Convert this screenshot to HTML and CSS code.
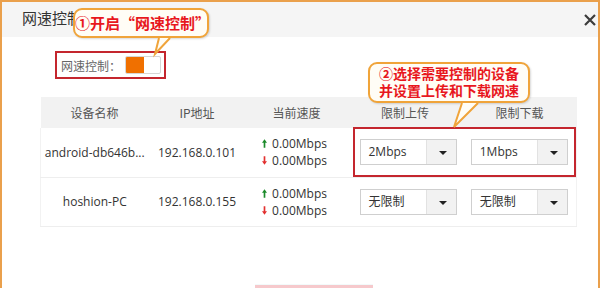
FILE: index.html
```html
<!DOCTYPE html>
<html lang="zh-CN">
<head>
    <meta charset="UTF-8">
    <title>网速控制</title>
    <link rel="stylesheet" href="styles.css">
</head>
<body>
    <div class="dialog">
        <div class="dialog-head">
            <h2>网速控制</h2>
            <span class="close">
                <svg width="12" height="12" viewBox="0 0 12 12"><path d="M1 1L11 11M11 1L1 11" stroke="#3c3c3c" stroke-width="2.2"/></svg>
            </span>
        </div>

        <div class="dialog-body">
            <div class="switch-row">
                <span class="switch-box">
                    <span class="switch-label">网速控制：</span>
                    <span class="switch"><i></i></span>
                </span>
            </div>

            <div class="table-wrap">
                <table>
                    <thead>
                        <tr>
                            <th class="c1">设备名称</th>
                            <th class="c2">IP地址</th>
                            <th class="c3">当前速度</th>
                            <th class="c4">限制上传</th>
                            <th class="c5">限制下载</th>
                        </tr>
                    </thead>
                    <tbody>
                        <tr>
                            <td>android-db646b...</td>
                            <td>192.168.0.101</td>
                            <td>
                                <div class="speed">
                                    <span><svg class="up" viewBox="0 0 6 10"><path d="M3 0L6 4H4V10H2V4H0Z"/></svg>0.00Mbps</span>
                                    <span><svg class="down" viewBox="0 0 6 10"><path d="M3 10L6 6H4V0H2V6H0Z"/></svg>0.00Mbps</span>
                                </div>
                            </td>
                            <td><div class="select sel-up"><span>2Mbps</span><b></b></div></td>
                            <td><div class="select"><span>1Mbps</span><b></b></div></td>
                        </tr>
                        <tr>
                            <td>hoshion-PC</td>
                            <td>192.168.0.155</td>
                            <td>
                                <div class="speed">
                                    <span><svg class="up" viewBox="0 0 6 10"><path d="M3 0L6 4H4V10H2V4H0Z"/></svg>0.00Mbps</span>
                                    <span><svg class="down" viewBox="0 0 6 10"><path d="M3 10L6 6H4V0H2V6H0Z"/></svg>0.00Mbps</span>
                                </div>
                            </td>
                            <td><div class="select sel-up"><span>无限制</span><b></b></div></td>
                            <td><div class="select"><span>无限制</span><b></b></div></td>
                        </tr>
                    </tbody>
                </table>
                <div class="mark"></div>
            </div>

            <div class="foot"><span class="btn-save"></span></div>
        </div>

        <!-- 标注气泡 -->
        <div class="tip tip-1">
            ①开启“网速控制”
            <svg class="tail" width="20" height="18" viewBox="0 0 20 18"><path d="M4 0L0 16L15 0" fill="#fffdf6" stroke="#f0a43a" stroke-width="2"/></svg>
        </div>
        <div class="tip tip-2">
            ②选择需要控制的设备<br>并设置上传和下载网速
            <svg class="tail" width="26" height="26" viewBox="0 0 26 26"><path d="M8 0L0 24L24 0" fill="#fffdf6" stroke="#f0a43a" stroke-width="2"/></svg>
        </div>
    </div>
</body>
</html>
```

FILE: styles.css
```css
* {
    box-sizing: border-box;
}
body {
    margin: 0;
    background: #fff;
    font-family: "Open Sans", "Noto Sans CJK SC", sans-serif;
}
.dialog {
    position: relative;
    width: 600px;
    height: 288px;
    overflow: hidden;
    border: 2px solid #eaa04c;
    border-bottom: none;
    background: #fff;
}
.dialog-head {
    display: flex;
    justify-content: space-between;
    align-items: center;
    height: 35px;
    padding: 0 2px 4px 20px;
    background: #f5f5f5;
}
.dialog-head h2 {
    margin: 0;
    font-family: "Noto Sans CJK SC", sans-serif;
    font-size: 15px;
    font-weight: normal;
    color: #333;
}
.close {
    display: flex;
    margin-top: 4px;
}

.dialog-body {
    padding: 14px 0 0 38px;
}
.switch-row {
    padding-left: 15px;
}
.switch-box {
    display: inline-flex;
    align-items: center;
    gap: 4px;
    height: 28px;
    padding: 0 3px 0 4px;
    border: 2px solid #c4262e;
}
.switch-label {
    font-family: "Noto Sans CJK SC", sans-serif;
    font-size: 12px;
    color: #666;
}
.switch {
    display: flex;
    width: 36px;
    height: 18px;
    border: 1px solid #d6d6d6;
    border-radius: 2px;
    background: #fff;
    overflow: hidden;
}
.switch i {
    width: 18px;
    background: #f07000;
}

.table-wrap {
    position: relative;
    width: 536px;
    margin-top: 18px;
}
table {
    width: 100%;
    border-collapse: collapse;
    table-layout: fixed;
    font-size: 12px;
    color: #333;
}
th, td {
    text-align: center;
    padding: 0;
}
th {
    height: 31px;
    background: #f2f2f2;
    font-family: "Noto Sans CJK SC", sans-serif;
    font-weight: normal;
    color: #555;
}
td {
    height: 49px;
    border-bottom: 1px solid #eeeeee;
    white-space: nowrap;
}
tbody tr td:first-child {
    border-left: 1px solid #f2f2f2;
}
tbody tr td:last-child {
    border-right: 1px solid #f2f2f2;
}
.c1 { width: 108px; }
.c2 { width: 97px; }
.c3 { width: 102px; }
.c4 { width: 115px; }
.c5 { width: 114px; }

.speed {
    display: inline-flex;
    flex-direction: column;
    align-items: flex-start;
    line-height: 17px;
    margin-left: -4px;
}
.speed span {
    display: flex;
    align-items: center;
    gap: 5px;
}
.speed svg {
    width: 5px;
    height: 11px;
}
.up { fill: #1b8a2a; }
.down { fill: #e2302f; }

.select {
    display: inline-flex;
    width: 97px;
    height: 26px;
    border: 1px solid #cfcfcf;
    text-align: left;
    vertical-align: middle;
}
.sel-up {
    margin-left: 6px;
}
.select span {
    flex: 1;
    padding-left: 8px;
    line-height: 24px;
    font-family: "Open Sans", "Noto Sans CJK SC", sans-serif;
    color: #333;
}
.select b {
    position: relative;
    width: 30px;
    background: #f2f2f2;
    border-left: 1px solid #e2e2e2;
}
.select b::after {
    content: "";
    position: absolute;
    left: 12px;
    top: 11px;
    border: 4px solid transparent;
    border-top: 4px solid #222;
    border-bottom: none;
}

.mark {
    position: absolute;
    left: 313px;
    top: 30px;
    width: 223px;
    height: 50px;
    border: 2px solid #c4262e;
}

.foot {
    margin-top: 57px;
    padding-left: 215px;
}
.btn-save {
    display: block;
    width: 118px;
    height: 30px;
    border-top: 1px solid #f2fafa;
    background: #f6c9cc;
}

.tip {
    position: absolute;
    padding: 4px 0;
    border: 2px solid #f0a43a;
    border-radius: 9px;
    background: #fffdf6;
    font-family: "Noto Sans CJK SC", sans-serif;
    font-weight: bold;
    color: #e8171d;
    text-align: center;
    white-space: nowrap;
    box-shadow: 1px 1px 2px rgba(0, 0, 0, 0.15);
}
.tip-1 {
    left: 71px;
    top: 6px;
    width: 136px;
    height: 30px;
    padding: 0;
    font-size: 15px;
    line-height: 26px;
}
.tip-2 {
    left: 366px;
    top: 60px;
    width: 162px;
    height: 41px;
    padding: 1px 0 0;
    font-size: 14px;
    line-height: 17px;
}
.tail {
    position: absolute;
    overflow: visible;
}
.tip-1 .tail {
    left: 80px;
    top: 28px;
}
.tip-2 .tail {
    left: 84px;
    top: 39px;
}
```
